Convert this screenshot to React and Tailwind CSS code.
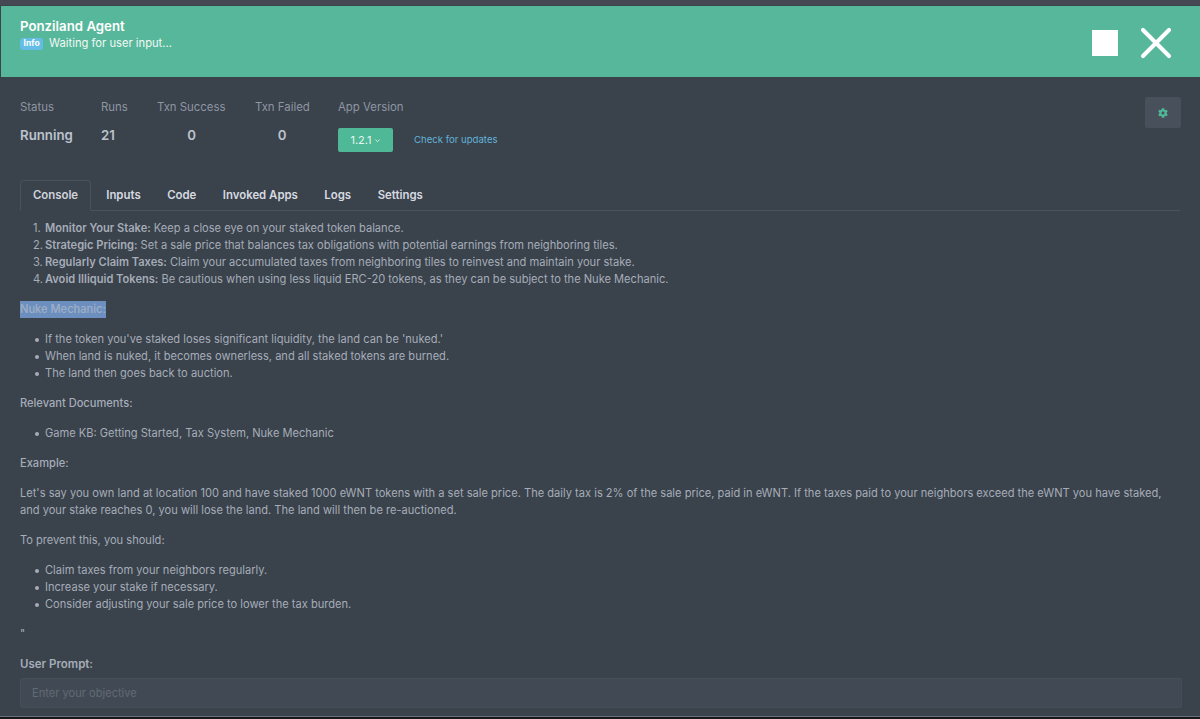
import React from "react"
import { X } from "lucide-react"
import { FaCog } from "react-icons/fa"

const stats = [
  { label: "Status", value: "Running", w: "w-[81px] text-left" },
  { label: "Runs", value: "21", w: "w-[56px] text-left" },
  { label: "Txn Success", value: "0", w: "w-[69px] mr-[29px] text-center" },
  { label: "Txn Failed", value: "0", w: "w-[54px] mr-[29px] text-center" },
]

const tabs = ["Inputs", "Code", "Invoked Apps", "Logs", "Settings"]

export default function App() {
  return (
    <div className="h-[719px] overflow-hidden flex flex-col bg-[#3a424c] text-[11.1px] leading-[17px] text-[#a6adb8] font-['Inter',sans-serif]">
      <div className="h-[5px] bg-[#454852]" />
      <header className="h-[72px] shrink-0 ml-px pl-[19px] pr-[18px] flex justify-between bg-[#57b79a] border-t border-[#3a424c]">
        <div className="pt-[12px]">
          <div className="text-[13.25px] leading-[17px] font-semibold text-white">Ponziland Agent</div>
          <div className="flex items-center gap-[6px] text-[11.2px] leading-[15px] text-[#f2f7f5] mt-[1px]">
            <span className="px-[3.5px] h-[12px] flex items-center rounded-[3px] bg-[#63bde6] text-[8.5px] font-bold text-white">Info</span>
            Waiting for user input...
          </div>
        </div>
        <div className="flex items-center gap-[12px] pt-[3px]">
          <div className="size-[26px] bg-white" />
          <X size={52} strokeWidth={1.9} className="text-white" />
        </div>
      </header>

      <main className="flex-1 min-h-0 px-[20px] pt-[22px]">
        <div className="flex justify-between items-start">
          <div className="flex text-[11.4px]">
            {stats.map((s) => (
              <div key={s.label} className="flex flex-col">
                <div className="text-[#8e96a2] whitespace-nowrap">{s.label}</div>
                <div className={`mt-[11px] text-[13.25px] leading-[17px] font-semibold text-[#bcc3cd] ${s.w}`}>{s.value}</div>
              </div>
            ))}
            <div className="flex flex-col">
              <div className="text-[#8e96a2]">App Version</div>
              <div className="mt-[12px] flex items-center gap-[21px]">
                <button className="w-[55px] h-[24px] rounded-[2px] bg-[#4fb896] text-[#e8f6f1] text-[11px] flex items-center justify-center gap-[2px]">
                  1.2.1
                  <svg width="7" height="7" viewBox="0 0 24 24" fill="none" stroke="currentColor" strokeWidth="3"><path d="M5 9l7 7 7-7" /></svg>
                </button>
                <a className="-mt-px text-[#63b3d8] text-[9.6px]">Check for updates</a>
              </div>
            </div>
          </div>
          <button className="mt-[-2px] mr-[-1px] w-[36px] h-[31px] flex items-center justify-center rounded-[2px] bg-[#48505b]">
            <FaCog size={10} className="text-[#4fb896]" />
          </button>
        </div>

        <nav className="mt-[28px] h-[31px] flex items-stretch border-b border-[#4a525d] font-semibold text-[11.4px] text-[#d6dae0]">
          <div className="w-[71px] h-[31px] mr-[2px] flex items-center justify-center rounded-t-[4px] border border-[#4a525d] border-b-[#3a424c] text-[#cfd4db]">Console</div>
          {tabs.map((t) => (
            <div key={t} className="px-[13.25px] flex items-center">{t}</div>
          ))}
        </nav>

        <ol className="mt-[9px] pl-[25px]">
          <li className="relative"><Num n={1} /><b className="font-semibold">Monitor Your Stake:</b> Keep a close eye on your staked token balance.</li>
          <li className="relative"><Num n={2} /><b className="font-semibold">Strategic Pricing:</b> Set a sale price that balances tax obligations with potential earnings from neighboring tiles.</li>
          <li className="relative"><Num n={3} /><b className="font-semibold">Regularly Claim Taxes:</b> Claim your accumulated taxes from neighboring tiles to reinvest and maintain your stake.</li>
          <li className="relative"><Num n={4} /><b className="font-semibold">Avoid Illiquid Tokens:</b> Be cautious when using less liquid ERC-20 tokens, as they can be subject to the Nuke Mechanic.</li>
        </ol>

        <p className="mt-[13px]"><span className="inline-block bg-[#6d8fbf] text-[#9fb0c6] font-medium">Nuke Mechanic:</span></p>

        <Bullets items={[
          "If the token you've staked loses significant liquidity, the land can be 'nuked.'",
          "When land is nuked, it becomes ownerless, and all staked tokens are burned.",
          "The land then goes back to auction.",
        ]} />

        <p className="mt-[13px] font-medium">Relevant Documents:</p>

        <Bullets items={["Game KB: Getting Started, Tax System, Nuke Mechanic"]} />

        <p className="mt-[13px] font-medium">Example:</p>

        <p className="mt-[13px]">Let's say you own land at location 100 and have staked 1000 eWNT tokens with a set sale price. The daily tax is 2% of the sale price, paid in eWNT. If the taxes paid to your neighbors exceed the eWNT you have staked, and your stake reaches 0, you will lose the land. The land will then be re-auctioned.</p>

        <p className="mt-[13px]">To prevent this, you should:</p>

        <Bullets items={[
          "Claim taxes from your neighbors regularly.",
          "Increase your stake if necessary.",
          "Consider adjusting your sale price to lower the tax burden.",
        ]} />

        <p className="mt-[13px]">"</p>

        <div className="mt-[13px] text-[11.5px] font-semibold">User Prompt:</div>
        <div className="mt-[5px] mr-[-2px] h-[30px] px-[11px] flex items-center rounded-[2px] bg-[#414954] border border-[#454d58] text-[#616a76]">Enter your objective</div>
      </main>

      <div className="h-[3px] shrink-0 bg-[#15181c] border-t border-[#6b7079]" />
    </div>
  )
}

function Num({ n }) {
  return <span className="absolute -left-[12px]">{n}.</span>
}

function Bullets({ items }) {
  return (
    <ul className="mt-[13px] pl-[25px]">
      {items.map((t) => (
        <li key={t} className="relative">
          <span className="absolute -left-[10px] top-[7px] size-[4px] rounded-full bg-[#a6adb8]" />
          {t}
        </li>
      ))}
    </ul>
  )
}
